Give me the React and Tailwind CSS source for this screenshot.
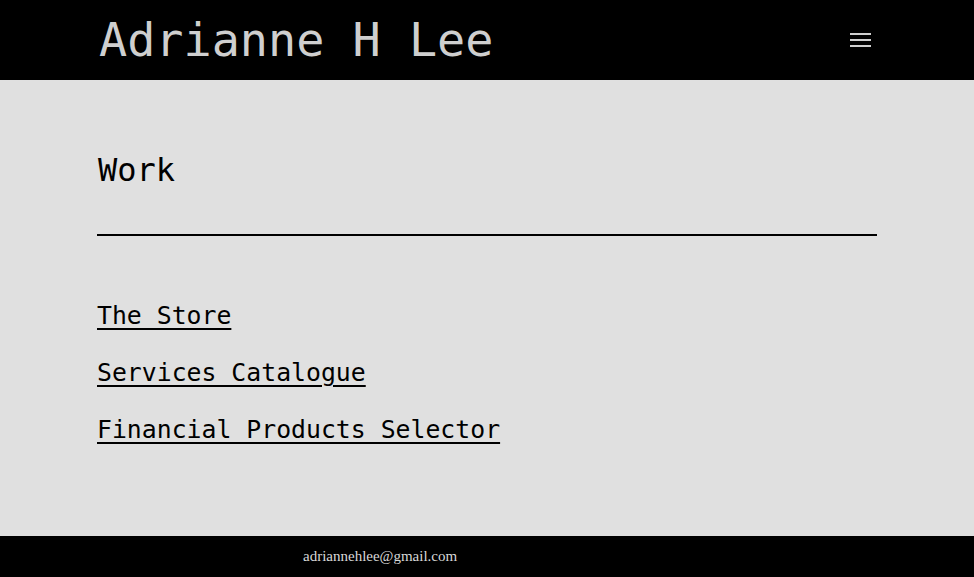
import { useState } from "react";

const mono = { fontFamily: '"DejaVu Sans Mono", monospace' };

const projects = ["The Store", "Services Catalogue", "Financial Products Selector"];

export default function App() {
  const [open, setOpen] = useState(false);

  return (
    <div className="min-h-[577px] flex flex-col bg-[#e0e0e0]">

      {/* Header */}
      <header className="h-20 bg-black">
        <div className="w-[780px] mx-auto h-full flex items-center justify-between">
          <h1
            className="text-[46.8px] leading-none text-[#cfcfcf] pl-[2px]"
            style={mono}
          >
            Adrianne H Lee
          </h1>

          <button
            onClick={() => setOpen(!open)}
            className="w-[21px] flex flex-col gap-[4px] mr-[6px]"
          >
            <span className="h-[2px] bg-[#cfcfcf]" />
            <span className="h-[2px] bg-[#cfcfcf]" />
            <span className="h-[2px] bg-[#cfcfcf]" />
          </button>
        </div>
      </header>

      {/* Work */}
      <main className="flex-1 h-[456px]">
        <div className="w-[780px] mx-auto pt-[74px]">
          <h2 className="text-[32px] leading-none text-black pl-[1px]" style={mono}>
            Work
          </h2>

          <div className="mt-[48px] h-[2px] bg-black" />

          <ul className="mt-[65px] flex flex-col gap-[28px]">
            {projects.map((p) => (
              <li key={p}>
                <a
                  href="#"
                  className="text-[24.8px] leading-[29px] text-black underline decoration-2 underline-offset-[4px]"
                  style={mono}
                >
                  {p}
                </a>
              </li>
            ))}
          </ul>
        </div>
      </main>

      {/* Footer */}
      <footer className="h-[41px] bg-black flex items-center">
        <p
          className="ml-[303px] text-[15px] text-[#d8d8d8]"
          style={{ fontFamily: '"Liberation Serif", serif' }}
        >
          adriannehlee@gmail.com
        </p>
      </footer>

    </div>
  );
}
